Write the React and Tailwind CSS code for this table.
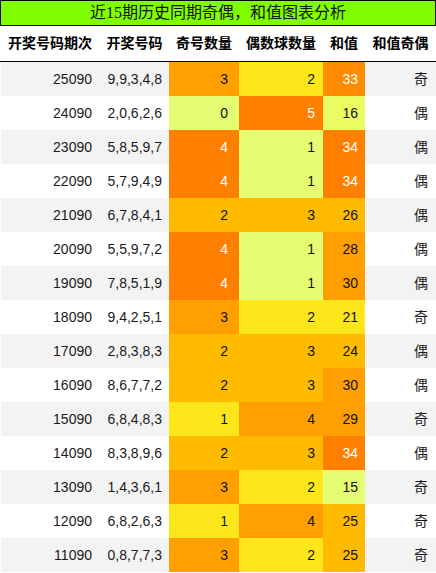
import React from "react";

const rows = [
  ["25090", "9,9,3,4,8", 3, 2, 33, "奇"],
  ["24090", "2,0,6,2,6", 0, 5, 16, "偶"],
  ["23090", "5,8,5,9,7", 4, 1, 34, "偶"],
  ["22090", "5,7,9,4,9", 4, 1, 34, "偶"],
  ["21090", "6,7,8,4,1", 2, 3, 26, "偶"],
  ["20090", "5,5,9,7,2", 4, 1, 28, "偶"],
  ["19090", "7,8,5,1,9", 4, 1, 30, "偶"],
  ["18090", "9,4,2,5,1", 3, 2, 21, "奇"],
  ["17090", "2,8,3,8,3", 2, 3, 24, "偶"],
  ["16090", "8,6,7,7,2", 2, 3, 30, "偶"],
  ["15090", "6,8,4,8,3", 1, 4, 29, "奇"],
  ["14090", "8,3,8,9,6", 2, 3, 34, "偶"],
  ["13090", "1,4,3,6,1", 3, 2, 15, "奇"],
  ["12090", "6,8,2,6,3", 1, 4, 25, "奇"],
  ["11090", "0,8,7,7,3", 3, 2, 25, "奇"],
];

const oddColor = {
  0: ["#e4fd73", "#111"],
  1: ["#fde619", "#111"],
  2: ["#ffbb00", "#111"],
  3: ["#ff9f00", "#111"],
  4: ["#ff8000", "#fff"],
  5: ["#ff8000", "#fff"],
};
const evenColor = {
  0: ["#e4fd73", "#111"],
  1: ["#e4fd73", "#111"],
  2: ["#fde619", "#111"],
  3: ["#ffbb00", "#111"],
  4: ["#ff9f00", "#111"],
  5: ["#ff8000", "#fff"],
};
const sumColor = (s) => {
  if (s <= 15) return ["#e4fd73", "#111"];
  if (s <= 17) return ["#ebfb62", "#111"];
  if (s <= 22) return ["#fde619", "#111"];
  if (s <= 26) return ["#ffbb00", "#111"];
  if (s <= 30) return ["#ff9f00", "#111"];
  if (s <= 33) return ["#ff8c00", "#fff"];
  return ["#ff8000", "#fff"];
};

const font = { fontFamily: '"Liberation Sans", "Noto Sans CJK SC", sans-serif' };

export default function App() {
  return (
    <div className="w-[436px] h-[573px] bg-white overflow-hidden" style={font}>
      <div className="h-[26px] bg-[#7fff00] border border-black flex items-center justify-center text-[16px] text-[#111] leading-none" style={{ fontFamily: '"Liberation Serif", "Noto Sans CJK SC", serif' }}>
        近15期历史同期奇偶，和值图表分析
      </div>
      <div className="grid grid-cols-[100px_69px_70px_84px_42px_71px] h-[36px] border-b border-black items-center text-[14px] font-bold text-black">
        <div className="text-center">开奖号码期次</div>
        <div className="text-center">开奖号码</div>
        <div className="text-center">奇号数量</div>
        <div className="text-center">偶数球数量</div>
        <div className="text-center">和值</div>
        <div className="text-center">和值奇偶</div>
      </div>
      <div className="pl-[1px]">
        {rows.map((r, i) => {
          const oc = oddColor[r[2]];
          const ec = evenColor[r[3]];
          const sc = sumColor(r[4]);
          return (
            <div
              key={r[0]}
              className={`grid grid-cols-[99px_69px_70px_84px_42px_71px] h-[34px] text-[14px] text-[#1a1a1a] ${i % 2 === 0 ? "bg-[#f3f3f3]" : "bg-white"}`}
            >
              <div className="flex items-center justify-end pr-[8px]">{r[0]}</div>
              <div className="flex items-center justify-end pr-[7px]">{r[1]}</div>
              <div className="flex items-center justify-end pr-[11px]" style={{ background: oc[0], color: oc[1] }}>{r[2]}</div>
              <div className="flex items-center justify-end pr-[8px]" style={{ background: ec[0], color: ec[1] }}>{r[3]}</div>
              <div className="flex items-center justify-end pr-[7px]" style={{ background: sc[0], color: sc[1] }}>{r[4]}</div>
              <div className="flex items-center justify-end pr-[8px]">{r[5]}</div>
            </div>
          );
        })}
      </div>
    </div>
  );
}
